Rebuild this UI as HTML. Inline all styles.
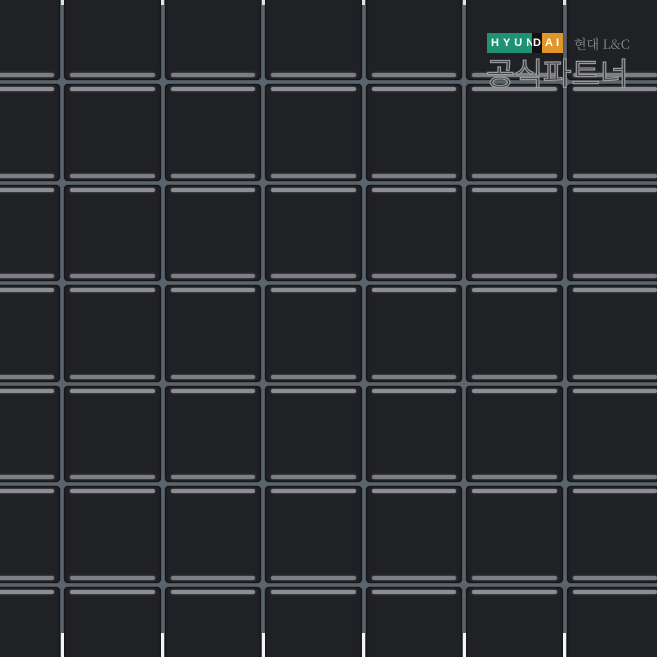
<!DOCTYPE html>
<html><head><meta charset="utf-8"><style>
html,body{margin:0;padding:0;width:657px;height:657px;overflow:hidden;background:#5b646c;}
.wrap{position:fixed;left:0;top:0;width:657px;height:657px;overflow:hidden;}
.g{position:absolute;left:-38.5px;top:-18.5px;display:grid;grid-template-columns:repeat(7,100.5px);grid-template-rows:repeat(7,100.5px);}
.c{position:relative;}
.t{position:absolute;left:2px;top:2px;right:2px;bottom:2px;background:#202125;border-radius:4px;box-shadow:inset 0 0 2px #000,0 0 1px #111;}
.t:before,.t:after{content:"";position:absolute;left:6px;right:6px;height:4px;border-radius:2px;background:#8d8e92;box-shadow:0 0 2px #6a6b6f;}
.t:before{top:3px;}
.t:after{bottom:3px;background:#7e7f83;}
.w{position:absolute;top:633px;width:3px;height:24px;background:#f4f4f4;}
.w2{position:absolute;top:0;width:3px;height:5px;background:#dfe3e6;}
.logo{position:absolute;left:487px;top:33px;height:20px;display:flex;font:bold 11px "Liberation Sans",sans-serif;color:#fff;line-height:20px;white-space:nowrap;}
.logo span{display:block;text-align:center;letter-spacing:4px;overflow:hidden;}
.big{position:absolute;left:486px;top:52px;font:31px "Noto Sans CJK KR","NanumGothic",sans-serif;color:#3a3b3e;-webkit-text-stroke:1.2px #9a9b9e;letter-spacing:0px;line-height:40px;white-space:nowrap;}
.sm{position:absolute;left:574px;top:34px;font:13px "Noto Serif CJK SC","Liberation Serif",serif;color:#8a8b8e;white-space:nowrap;}
</style></head><body><div class="wrap">
<div class="g">
<div class="c"><div class="t"></div></div><div class="c"><div class="t"></div></div><div class="c"><div class="t"></div></div><div class="c"><div class="t"></div></div><div class="c"><div class="t"></div></div><div class="c"><div class="t"></div></div><div class="c"><div class="t"></div></div>
<div class="c"><div class="t"></div></div><div class="c"><div class="t"></div></div><div class="c"><div class="t"></div></div><div class="c"><div class="t"></div></div><div class="c"><div class="t"></div></div><div class="c"><div class="t"></div></div><div class="c"><div class="t"></div></div>
<div class="c"><div class="t"></div></div><div class="c"><div class="t"></div></div><div class="c"><div class="t"></div></div><div class="c"><div class="t"></div></div><div class="c"><div class="t"></div></div><div class="c"><div class="t"></div></div><div class="c"><div class="t"></div></div>
<div class="c"><div class="t"></div></div><div class="c"><div class="t"></div></div><div class="c"><div class="t"></div></div><div class="c"><div class="t"></div></div><div class="c"><div class="t"></div></div><div class="c"><div class="t"></div></div><div class="c"><div class="t"></div></div>
<div class="c"><div class="t"></div></div><div class="c"><div class="t"></div></div><div class="c"><div class="t"></div></div><div class="c"><div class="t"></div></div><div class="c"><div class="t"></div></div><div class="c"><div class="t"></div></div><div class="c"><div class="t"></div></div>
<div class="c"><div class="t"></div></div><div class="c"><div class="t"></div></div><div class="c"><div class="t"></div></div><div class="c"><div class="t"></div></div><div class="c"><div class="t"></div></div><div class="c"><div class="t"></div></div><div class="c"><div class="t"></div></div>
<div class="c"><div class="t"></div></div><div class="c"><div class="t"></div></div><div class="c"><div class="t"></div></div><div class="c"><div class="t"></div></div><div class="c"><div class="t"></div></div><div class="c"><div class="t"></div></div><div class="c"><div class="t"></div></div>
</div>
<div class="w" style="left:61px"></div><div class="w" style="left:161px"></div><div class="w" style="left:262px"></div><div class="w" style="left:362px"></div><div class="w" style="left:463px"></div><div class="w" style="left:563px"></div>
<div class="w2" style="left:61px"></div><div class="w2" style="left:161px"></div><div class="w2" style="left:262px"></div><div class="w2" style="left:362px"></div><div class="w2" style="left:463px"></div><div class="w2" style="left:563px"></div>
<div class="logo"><span style="background:#1f9274;width:45px;padding-left:4px;box-sizing:border-box;text-align:left">HYUN</span><span style="background:#111;width:10px;letter-spacing:0">D</span><span style="background:#e0962a;width:21px;letter-spacing:3px;padding-left:2px;box-sizing:border-box">AI</span></div>
<div class="sm">현대 L&amp;C</div>
<div class="big">공식파트너</div>
</div></body></html>
